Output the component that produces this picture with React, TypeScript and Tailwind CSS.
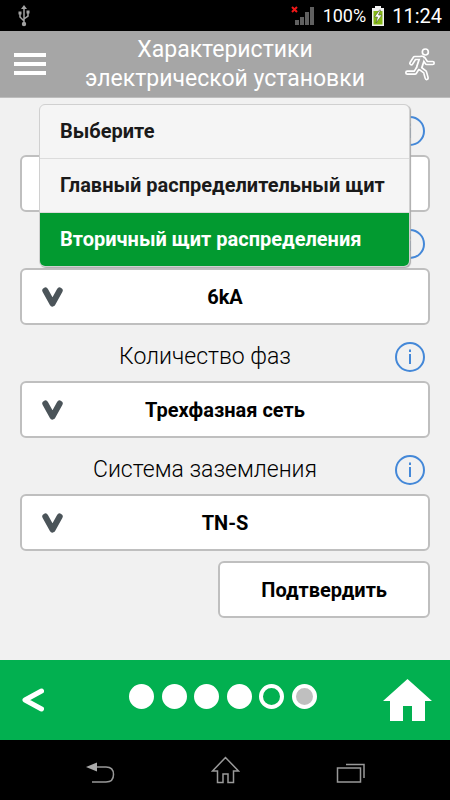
import React, { useState } from 'react';
import clsx from 'clsx';

const PANEL_TYPES = ['Выберите', 'Главный распределительный щит', 'Вторичный щит распределения'];

const FIELDS = [
  { id: 'breaking', label: 'Отключающая способность', hideLabel: true, options: ['6kA', '10kA', '15kA'] },
  { id: 'phases', label: 'Количество фаз', hideLabel: false, options: ['Трехфазная сеть', 'Однофазная сеть'] },
  { id: 'earthing', label: 'Система заземления', hideLabel: false, options: ['TN-S', 'TN-C', 'TT', 'IT'] },
];

const STEPS = ['done', 'done', 'done', 'done', 'current', 'next'];

function UsbIcon() {
  return (
    <svg width="12" height="22" viewBox="0 0 12 22" fill="none" stroke="#a3a3a3" strokeWidth="1.5">
      <path d="M6 3v16M2 8v4l4 4M10 7v4l-4 3" />
      <path d="M6 0l3 4H3zM.5 6.500h3v3h-3zM8.500 5.500h3v3h-3z" fill="#a3a3a3" stroke="none" />
      <circle cx="6" cy="19" r="2.200" fill="#a3a3a3" stroke="none" />
    </svg>
  );
}

function SignalIcon() {
  return (
    <svg width="24" height="20" viewBox="0 0 24 20">
      <path d="M4 14h4v5H4zM9 11h4v8H9zM14 6h4v13h-4zM19 1h4v18h-4z" fill="#606060" />
      <path d="M1 1l5 5M6 1L1 6" stroke="#f01818" strokeWidth="2" />
    </svg>
  );
}

function BatteryIcon() {
  return (
    <svg width="12" height="20" viewBox="0 0 12 20">
      <path d="M3 0h6v2h3v18H0V2h3z" fill="#f2f2f2" />
      <path d="M1.500 5h9v13.500h-9z" fill="#86b817" />
      <path d="M7.500 4L2.500 11h3l-1.500 6 6-8H6.500l2-5z" fill="#fff" stroke="#4b5a2a" strokeWidth=".6" />
    </svg>
  );
}

function RunnerIcon() {
  const limbs = 'M594 174L582 203M594 173H570L560 189M598 176L606 188H624M584 202L601 215L606 233M580 203L571 217H548';
  return (
    <svg width="32" height="34" viewBox="538 140 96 102" fill="none" strokeLinecap="round" strokeLinejoin="round">
      <path d={limbs} stroke="#fff" strokeWidth="14" />
      <path d="M592 176L584 200" stroke="#fff" strokeWidth="21" />
      <path d={limbs} stroke="#a6a6a6" strokeWidth="4" />
      <path d="M592 176L584 200" stroke="#a6a6a6" strokeWidth="10" />
      <circle cx="602" cy="155" r="9" fill="#a6a6a6" stroke="#fff" strokeWidth="5" />
    </svg>
  );
}

function InfoIcon() {
  return (
    <svg width="30" height="30" viewBox="0 0 30 30" fill="none" stroke="#4488d8">
      <circle cx="15" cy="15" r="14" strokeWidth="2" />
      <path d="M15 12v10M15 7.500v2.500" strokeWidth="2" />
    </svg>
  );
}

interface DropdownProps {
  id: string;
  label?: string;
  options: string[];
  value?: string;
  onChange?: (value: string) => void;
}

function Dropdown({ id, label, options, value, onChange }: DropdownProps) {
  return (
    <div className="relative">
      <select
        id={id}
        aria-label={label}
        value={value}
        onChange={(e) => onChange?.(e.target.value)}
        className="block w-full h-[57px] appearance-none rounded-md border-2 border-[#bfbfbf] bg-white text-center [text-align-last:center] text-xl font-bold text-black outline-none"
      >
        {options.map((option) => (
          <option key={option}>{option}</option>
        ))}
      </select>
      <svg className="pointer-events-none absolute left-[22px] top-[19px]" width="21" height="20" viewBox="0 0 21 20" fill="none">
        <path d="M3.300 3.500L10.500 16.500L17.700 3.500" stroke="#4b5459" strokeWidth="6" strokeLinecap="round" strokeLinejoin="round" />
      </svg>
    </div>
  );
}

function FieldHeader({ id, label }: { id: string; label?: string }) {
  return (
    <div className="flex h-14 items-center gap-[5px] pt-2 pr-[5px]">
      <label htmlFor={id} className="flex-1 text-center text-[23px] leading-6 font-light text-black">
        {label}
      </label>
      <button type="button" aria-label="Справка">
        <InfoIcon />
      </button>
    </div>
  );
}

export default function App() {
  const [panel, setPanel] = useState(PANEL_TYPES[2]);

  return (
    <div className="flex min-h-screen flex-col bg-[#f1f1f1] font-['Roboto',sans-serif]">
      <div className="flex h-[31px] items-center bg-black pl-[18px] pr-2 text-white">
        <UsbIcon />
        <div className="ml-auto flex items-center">
          <SignalIcon />
          <span className="ml-2 text-lg">100%</span>
          <span className="ml-1.5 mr-2">
            <BatteryIcon />
          </span>
          <span className="text-xl">11:24</span>
        </div>
      </div>

      <header className="flex h-[67px] items-center justify-between border-b border-[#bdbdbd] bg-[#a6a6a6] px-3.5 text-white">
        <button type="button" aria-label="Меню" className="flex w-8 flex-col gap-[5px]">
          <span className="h-1 w-full bg-white" />
          <span className="h-1 w-full bg-white" />
          <span className="h-1 w-full bg-white" />
        </button>
        <h1 className="text-center text-[23px] leading-[29px]">
          Характеристики
          <br />
          электрической установки
        </h1>
        <button type="button" aria-label="Выход">
          <RunnerIcon />
        </button>
      </header>

      <main className="relative flex-1 px-5 pt-px pb-10">
        <FieldHeader id="panel" />
        <Dropdown id="panel" label="Тип щита" options={PANEL_TYPES} value={panel} onChange={setPanel} />

        {FIELDS.map((field) => (
          <div key={field.id}>
            <FieldHeader id={field.id} label={field.hideLabel ? undefined : field.label} />
            <Dropdown id={field.id} label={field.label} options={field.options} />
          </div>
        ))}

        <div className="mt-2.5 flex justify-end">
          <button type="button" className="h-[57px] rounded-md border-2 border-[#bfbfbf] bg-white px-[41px] text-xl font-bold text-black">
            Подтвердить
          </button>
        </div>

        {/* open list of panel types */}
        <ul className="absolute left-[39px] right-10 top-1.5 overflow-hidden rounded-md border border-[#d0d0d0] bg-[#f5f5f5] shadow-[1px_1px_1px_#aaaaaa]">
          {PANEL_TYPES.map((type, i) => (
            <li key={type} className={clsx(i > 0 && 'border-t border-[#dcdcdc]')}>
              <button
                type="button"
                onClick={() => setPanel(type)}
                className={clsx(
                  'block h-[53px] w-full whitespace-nowrap px-5 pb-0.5 text-left text-xl font-bold',
                  type === panel ? 'bg-[#029a30] text-white' : 'text-[#1a1a1a]'
                )}
              >
                {type}
              </button>
            </li>
          ))}
        </ul>
      </main>

      <footer className="flex h-20 items-center justify-between bg-[#02b050] px-[18px]">
        <button type="button" aria-label="Назад" className="flex w-[45px] pl-1">
          <svg width="22" height="26" viewBox="0 0 22 26" fill="none">
            <path d="M19.500 4L3 13L19.500 22" stroke="#fff" strokeWidth="5" strokeLinecap="round" strokeLinejoin="round" />
          </svg>
        </button>
        <div className="mb-2 flex w-[188px] justify-between">
          {STEPS.map((step, i) => (
            <span
              key={i}
              className={clsx(
                'size-[25px] rounded-full border-4 border-white',
                step === 'done' && 'bg-white',
                step === 'next' && 'bg-[#bfbfbf]'
              )}
            />
          ))}
        </div>
        <button type="button" aria-label="Главная">
          <svg width="49" height="42" viewBox="0 0 49 42">
            <path d="M24.500 0L49 22H42V42H29V27H20V42H7V22H0z" fill="#fff" />
          </svg>
        </button>
      </footer>

      <nav className="flex h-[60px] items-center justify-center gap-24 bg-black">
        <button type="button" aria-label="Системная кнопка назад">
          <svg width="29" height="28" viewBox="0 0 29 28" fill="none">
            <path d="M11 11H20Q27.500 11 27.500 18.500Q27.500 26 20 26H6" stroke="#999" strokeWidth="1.500" />
            <path d="M0 11L11 6.500V15.500z" fill="#aaa" />
          </svg>
        </button>
        <button type="button" aria-label="Домашний экран">
          <svg width="29" height="28" viewBox="0 0 29 28" fill="none">
            <path d="M14.500 1.500L1.500 15H6.500V26.500H12V18H17V26.500H22.500V15H27.500z" stroke="#999" strokeWidth="1.500" />
          </svg>
        </button>
        <button type="button" aria-label="Недавние приложения">
          <svg width="29" height="28" viewBox="0 0 29 28" fill="none">
            <path d="M1.500 12H24.500V26H1.500zM10 8.500H28V22" stroke="#999" strokeWidth="1.500" />
          </svg>
        </button>
      </nav>
    </div>
  );
}
